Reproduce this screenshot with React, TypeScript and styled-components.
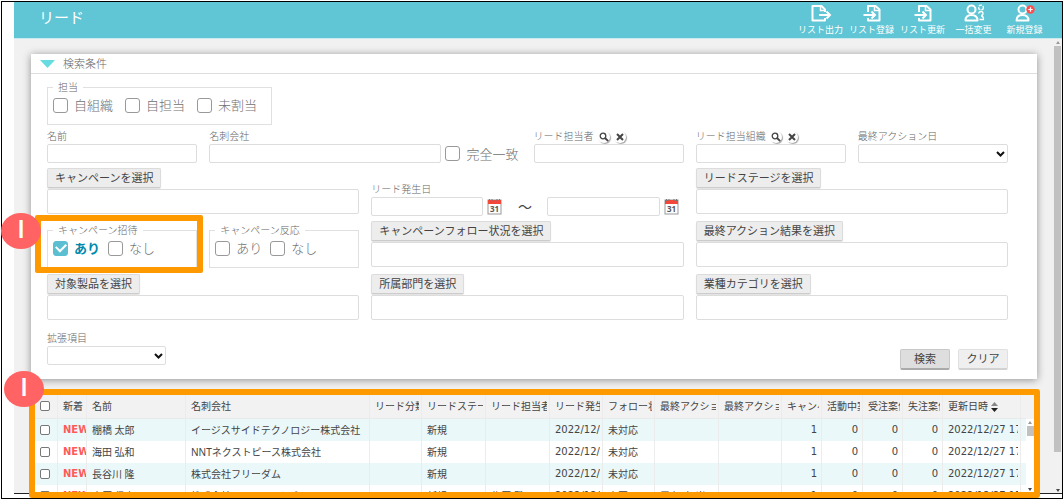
import React, { useId } from "react";
import styled, { createGlobalStyle, css } from "styled-components";

const GlobalStyle = createGlobalStyle`
  * { box-sizing: border-box; }
  body {
    margin: 0;
    background: #fff;
    color: #666;
    font-family: "Noto Sans", "Noto Sans CJK JP", sans-serif;
    font-size: 10px;
    font-weight: 300;
  }
  button, input, select { font: inherit; color: inherit; margin: 0; }
`;

const Frame = styled.div`
  display: flex;
  flex-direction: column;
  height: calc(100vh - 1px);
  margin: 1px 0 0 1px;
  padding: 0 0 4px 12px;
  border: 1px solid #000;
`;

const Header = styled.header`
  display: flex;
  flex: none;
  justify-content: space-between;
  height: 37px;
  padding: 0 12px 0 25px;
  color: #fff;
  background: #60c5d4;
  border-bottom: 1px solid #c9eaef;
`;

const Title = styled.h1`
  margin: 0;
  font-size: 15px;
  font-weight: 400;
  line-height: 30px;
`;

const Actions = styled.nav`
  display: flex;
`;

const ActionButton = styled.button`
  display: flex;
  flex-direction: column;
  align-items: center;
  width: 51px;
  padding: 2px 0 0;
  border: 0;
  background: none;
  color: #fff;
  font-size: 9px;
  font-weight: 400;
  line-height: 12px;
  white-space: nowrap;
  svg { flex: none; }
`;

const Main = styled.div`
  display: flex;
  flex: 1;
  min-height: 0;
  background: #f1f1f1;
  border-bottom: 1px solid #222;
`;

const Content = styled.main`
  display: flex;
  flex: 1;
  flex-direction: column;
  min-width: 0;
  padding: 15px 16px 0 17px;
`;

const ScrollTrack = styled.div<{ $wide?: boolean }>`
  display: flex;
  flex: 1;
  flex-direction: column;
  align-items: center;
  justify-content: space-between;
  width: ${(p) => (p.$wide ? "9px" : "8px")};
  padding: 2px 0 1px;
  background: ${(p) => (p.$wide ? "#f1f1f1" : "#fff")};
`;

const PageScroll = styled.div`
  display: flex;
  flex: none;
`;

const Thumb = styled.div<{ $share: string }>`
  flex: none;
  width: 7px;
  height: ${(p) => p.$share};
  margin: 2px 0 auto;
  background: #c1c1c1;
`;

const Arrow = styled.span<{ $down?: boolean }>`
  flex: none;
  border: 2px solid transparent;
  ${(p) =>
    p.$down
      ? css`border-top: 3px solid #444; border-bottom: 0;`
      : css`border-bottom: 3px solid #999; border-top: 0;`}
`;

const Card = styled.section`
  flex: none;
  background: #fff;
  box-shadow: 0 1px 8px rgba(0, 0, 0, 0.4);
`;

const CardHead = styled.h2`
  display: flex;
  align-items: center;
  gap: 8px;
  height: 20px;
  margin: 0;
  padding-left: 9px;
  border-bottom: 1px solid #ddd;
  font-size: 11px;
  font-weight: 300;
  line-height: 18px;
`;

const Form = styled.form`
  display: flex;
  flex-direction: column;
  padding: 7px 29px 14px 16px;
`;

const FieldGrid = styled.div`
  display: grid;
  grid-template-columns: repeat(6, minmax(0, 1fr));
  grid-template-rows: 34px;
  grid-auto-rows: 48px;
  gap: 5px 12px;
  margin-top: 4px;
`;

const Cell = styled.div<{ $span?: number; $end?: boolean }>`
  position: relative;
  display: flex;
  flex-direction: column;
  justify-content: ${(p) => (p.$end ? "flex-end" : "flex-start")};
  grid-column: span ${(p) => p.$span ?? 1};
`;

const LabelRow = styled.div`
  display: flex;
  align-items: center;
  gap: 4px;
  height: 15px;
  line-height: 15px;
  white-space: nowrap;
`;

const RoundButton = styled.button`
  display: flex;
  align-items: center;
  justify-content: center;
  width: 12px;
  height: 12px;
  padding: 0;
  border: 0;
  border-radius: 50%;
  background: #fff;
  box-shadow: 1px 1px 1px rgba(0, 0, 0, 0.35);
`;

const box = css`
  border: 1px solid #ddd;
  border-radius: 2px;
  background: #fff;
`;

const TextInput = styled.input<{ $tall?: boolean }>`
  ${box}
  flex: 1 1 0;
  width: 100%;
  min-width: 0;
  min-height: ${(p) => (p.$tall ? "25px" : "19px")};
  max-height: ${(p) => (p.$tall ? "25px" : "19px")};
  padding: 0 4px;
`;

const SelectWrap = styled.div<{ $narrow?: boolean }>`
  position: relative;
  display: flex;
  width: ${(p) => (p.$narrow ? "119px" : "100%")};
  svg {
    position: absolute;
    top: 7px;
    right: 3px;
    pointer-events: none;
  }
`;

const Select = styled.select`
  ${box}
  flex: 1;
  height: 19px;
  appearance: none;
`;

const CompanyRow = styled.div`
  display: flex;
  align-items: center;
  gap: 4px;
  padding-right: 3px;
`;

const PickButton = styled.button`
  align-self: flex-start;
  height: 20px;
  margin-bottom: 1px;
  padding: 0 7px 1px;
  border: 1px solid #dcdcdc;
  border-bottom-color: #ccc;
  border-radius: 2px;
  background: #ededed;
  box-shadow: 0 1px 1px rgba(0, 0, 0, 0.12);
  color: #444;
  font-size: 11px;
  font-weight: 400;
  line-height: 16px;
  white-space: nowrap;
`;

const FormButton = styled.button<{ $primary?: boolean }>`
  width: 50px;
  height: 21px;
  padding: 0 0 1px;
  border: 1px solid ${(p) => (p.$primary ? "#c8c8c8" : "#e0e0e0")};
  border-bottom: 2px solid ${(p) => (p.$primary ? "#aaa" : "#d2d2d2")};
  border-radius: 2px;
  background: ${(p) => (p.$primary ? "#dedede" : "#efefef")};
  color: #444;
  font-size: 11px;
  font-weight: 400;
  line-height: 16px;
`;

const Group = styled.fieldset<{ $gap: number; $fit?: boolean }>`
  display: flex;
  align-items: center;
  gap: ${(p) => p.$gap}px;
  align-self: ${(p) => (p.$fit ? "flex-start" : "stretch")};
  height: 44px;
  min-width: 0;
  margin: ${(p) => (p.$fit ? "0" : "3px 0 0")};
  padding: 0 14px 0 5px;
  border: 1px solid #e0e0e0;
`;

const Legend = styled.legend`
  padding: 0 5px;
  line-height: 12px;
`;

const CheckLabel = styled.label<{ $on?: boolean }>`
  display: flex;
  align-items: center;
  gap: 6px;
  padding-top: 4px;
  margin-bottom: -2px;
  color: ${(p) => (p.$on ? "#0089ab" : "#707070")};
  font-size: 13px;
  font-weight: ${(p) => (p.$on ? 700 : 300)};
  line-height: 16px;
  white-space: nowrap;
  ${CompanyRow} & { padding: 0; margin: 0; }
`;

const Checkbox = styled.input.attrs({ type: "checkbox" })<{ $small?: boolean }>`
  display: flex;
  align-items: center;
  justify-content: center;
  flex: none;
  width: ${(p) => (p.$small ? "10px" : "15px")};
  height: ${(p) => (p.$small ? "10px" : "15px")};
  appearance: none;
  border: 1px solid ${(p) => (p.$small ? "#777" : "#999")};
  border-radius: ${(p) => (p.$small ? "2px" : "3px")};
  background: #fff;
  &:checked {
    border-color: #5bbfd1;
    background: #5bbfd1;
  }
  &:checked::after {
    content: "";
    width: 8px;
    height: 5px;
    margin-bottom: 3px;
    border: solid #fff;
    border-width: 0 0 2px 2px;
    transform: rotate(-45deg);
  }
`;

const DateRange = styled.div`
  display: grid;
  grid-template-columns: 1fr 15px 37px 1fr 15px;
  column-gap: 4px;
  align-items: center;
  padding-right: 5px;
  line-height: 19px;
  text-align: center;
`;

const Tilde = styled.span`
  color: #444;
  font-size: 14px;
  font-weight: 400;
`;

const IconButton = styled.button`
  display: flex;
  padding: 0;
  border: 0;
  background: none;
`;

const FormFoot = styled.div`
  display: flex;
  align-items: flex-end;
  justify-content: space-between;
  margin-top: 9px;
`;

const FootButtons = styled.div`
  display: flex;
  gap: 8px;
  margin-bottom: -5px;
`;

const Highlight = styled.div`
  position: absolute;
  inset: -6px -6px -4px -12px;
  z-index: 1;
  border: 6px solid #ff9900;
  border-radius: 2px;
  pointer-events: none;
`;

const Marker = styled.span<{ $x: number; $y: number }>`
  position: absolute;
  left: ${(p) => p.$x}px;
  top: ${(p) => p.$y}px;
  z-index: 2;
  width: 40px;
  height: 36px;
  border-radius: 50%;
  background: #ff6363;
  color: #fff;
  font-family: Inter, sans-serif;
  font-size: 24px;
  font-weight: 600;
  line-height: 33px;
  text-align: center;
`;

const Results = styled.section`
  position: relative;
  display: flex;
  flex: 1;
  min-height: 60px;
  margin: 10px -3px -5px -2px;
  border: 6px solid #ff9900;
  border-radius: 3px;
  background: #fff;
`;

const TableClip = styled.div`
  flex: 1;
  min-width: 0;
  overflow: hidden;
`;

const Table = styled.table`
  width: 100%;
  table-layout: fixed;
  border-collapse: separate;
  border-spacing: 0;
  color: #444;
  tbody tr:nth-child(odd) { background: #ebf8fa; }
`;

const cellStyle = css`
  padding: 0 2px 0 5px;
  border-right: 1px solid #ececec;
  text-align: left;
  font-weight: 400;
  line-height: 20px;
  &:last-child { border-right: 0; }
`;

const Th = styled.th`
  ${cellStyle}
  height: 24px;
  padding-bottom: 2px;
  background: #f2f2f2;
  border-bottom: 1px solid #e9e9e9;
`;

const Td = styled.td<{ $num?: boolean; $flush?: boolean }>`
  ${cellStyle}
  height: 22px;
  padding-right: ${(p) => (p.$flush ? 0 : p.$num ? 4 : 2)}px;
  padding-bottom: 1px;
  text-align: ${(p) => (p.$num ? "right" : "left")};
`;

const Clip = styled.span<{ $digits?: boolean }>`
  display: block;
  overflow: hidden;
  font-family: ${(p) => (p.$digits ? '"DejaVu Sans", sans-serif' : "inherit")};
  white-space: nowrap;
`;

const NewFlag = styled.strong`
  color: #ff5a5a;
  font-family: "DejaVu Sans", sans-serif;
  font-weight: 700;
`;

const Gutter = styled.div`
  display: flex;
  flex: none;
  flex-direction: column;
`;

const GutterHead = styled.div`
  height: 24px;
  background: #f2f2f2;
`;

const ListOut = () => (
  <svg width="22" height="20" viewBox="0 0 22 20" fill="none" stroke="#fff" strokeWidth="2">
    <path d="M15 8V5.500L11.500 2H2.500v14.500H15V14" strokeLinejoin="round" />
    <path d="M10.500 2v4.500H15" strokeWidth="1.500" />
    <path d="M9 11h10.500M16.500 7.500L20 11l-3.500 3.500" />
  </svg>
);

const ListIn = () => (
  <svg width="22" height="20" viewBox="0 0 22 20" fill="none" stroke="#fff" strokeWidth="2">
    <path d="M7 8V2h7.500L18.500 5.500v11H7V14" strokeLinejoin="round" />
    <path d="M13.500 2v4.500h5" strokeWidth="1.500" />
    <path d="M2.500 11h11M10.500 7.500L14 11l-3.500 3.500" />
  </svg>
);

const People = () => (
  <svg width="22" height="20" viewBox="0 0 22 20" fill="none" stroke="#fff" strokeWidth="2">
    <circle cx="8.500" cy="5.500" r="4" />
    <path d="M2.500 16.500c0-3 1.500-5.500 6-5.500s6 2.500 6 5.500z" strokeLinejoin="round" />
    <circle cx="18" cy="3.500" r="2.400" strokeWidth="1.400" strokeDasharray="3 1" />
    <path d="M15.500 9.500c.5-1.500 1.500-2 2.500-2s2 .7 2 2-1 2-2 2" strokeWidth="1.300" />
    <path d="M16.500 15.500h4c0-2-.8-3.500-2.500-3.500" strokeWidth="1.300" />
  </svg>
);

const PersonAdd = () => (
  <svg width="22" height="20" viewBox="0 0 22 20" fill="none" stroke="#fff" strokeWidth="2">
    <circle cx="8.500" cy="5.500" r="4" />
    <path d="M2.500 16.500c0-3 1.500-5.500 6-5.500s6 2.500 6 5.500z" strokeLinejoin="round" />
    <circle cx="16.500" cy="5.500" r="4.200" fill="#ff4d4d" stroke="none" />
    <path d="M16.500 3.300v4.400M14.300 5.500h4.400" strokeWidth="1.200" />
  </svg>
);

const Calendar = () => (
  <svg width="15" height="17" viewBox="0 0 15 17">
    <rect x="1" y="2" width="13" height="14" fill="#fff" stroke="#999" />
    <rect x="1" y="2" width="13" height="4" fill="#f2483c" />
    <path d="M2.500 1v2M5 1v2M10 1v2M12.500 1v2" stroke="#777" />
    <text x="7.500" y="14" fontSize="8" fontWeight="700" fill="#555" textAnchor="middle">31</text>
  </svg>
);

const Chevron = () => (
  <svg width="9" height="6" viewBox="0 0 9 6" fill="none" stroke="#111" strokeWidth="2">
    <path d="M1 1l3.500 3.500L8 1" />
  </svg>
);

const Magnifier = () => (
  <svg width="10" height="10" viewBox="0 0 10 10" fill="none" stroke="#444">
    <circle cx="4" cy="4" r="2.800" strokeWidth="1.300" />
    <path d="M6 6l3.200 3.200" strokeWidth="1.800" />
  </svg>
);

const Cross = () => (
  <svg width="8" height="8" viewBox="0 0 8 8" fill="none" stroke="#444" strokeWidth="2">
    <path d="M1 1l6 6M7 1L1 7" />
  </svg>
);

const SortMark = () => (
  <svg width="7" height="10" viewBox="0 0 7 10" style={{ verticalAlign: "middle" }}>
    <path d="M0 4l3.500-4L7 4z" fill="#888" />
    <path d="M0 6l3.500 4L7 6z" fill="#222" />
  </svg>
);

function Check({ text, on }: { text: string; on?: boolean }) {
  return (
    <CheckLabel $on={on}>
      <Checkbox defaultChecked={on} />
      {text}
    </CheckLabel>
  );
}

function Field({ label, lookup }: { label: string; lookup?: boolean }) {
  const id = useId();
  return (
    <Cell>
      <LabelRow>
        <label htmlFor={id}>{label}</label>
        {lookup && (
          <>
            <RoundButton type="button" aria-label={`${label}を検索`}><Magnifier /></RoundButton>
            <RoundButton type="button" aria-label={`${label}をクリア`}><Cross /></RoundButton>
          </>
        )}
      </LabelRow>
      <TextInput id={id} />
    </Cell>
  );
}

function SelectField({ label, narrow }: { label: string; narrow?: boolean }) {
  const id = useId();
  return (
    <Cell>
      <LabelRow><label htmlFor={id}>{label}</label></LabelRow>
      <SelectWrap $narrow={narrow}>
        <Select id={id}><option></option></Select>
        <Chevron />
      </SelectWrap>
    </Cell>
  );
}

function Picker({ text }: { text: string }) {
  return (
    <Cell $span={2}>
      <PickButton type="button">{text}</PickButton>
      <TextInput $tall readOnly aria-label={text} />
    </Cell>
  );
}

const actions = [
  { text: "リスト出力", Icon: ListOut },
  { text: "リスト登録", Icon: ListIn },
  { text: "リスト更新", Icon: ListIn },
  { text: "一括変更", Icon: People },
  { text: "新規登録", Icon: PersonAdd },
];

const columns: { text: string; width?: number; num?: boolean; date?: boolean }[] = [
  { text: "名前", width: 99 },
  { text: "名刺会社" },
  { text: "リード分類", width: 52 },
  { text: "リードステージ", width: 64 },
  { text: "リード担当者", width: 64 },
  { text: "リード発生日", width: 53, date: true },
  { text: "フォロー状況", width: 52 },
  { text: "最終アクション日", width: 64 },
  { text: "最終アクション結果", width: 63 },
  { text: "キャンペーン", width: 40, num: true },
  { text: "活動中案件", width: 41, num: true },
  { text: "受注案件", width: 40, num: true },
  { text: "失注案件", width: 40, num: true },
  { text: "更新日時", width: 78, date: true },
];

const rows = [
  ["棚橋 太郎", "イージスサイドテクノロジー株式会社", "", "新規", "", "2022/12/27", "未対応", "", "", "1", "0", "0", "0", "2022/12/27 17:30"],
  ["海田 弘和", "NNTネクストピース株式会社", "", "新規", "", "2022/12/27", "未対応", "", "", "1", "0", "0", "0", "2022/12/27 17:30"],
  ["長谷川 隆", "株式会社フリーダム", "", "新規", "", "2022/12/27", "未対応", "", "", "1", "0", "0", "0", "2022/12/27 17:30"],
  ["岩原 信彦", "株式会社SSRシステムズ", "", "新規", "佐原 武", "2022/12/27", "商図", "電存 (担当)", "2022/12/14", "1", "0", "0", "0", "2022/12/27 17:30"],
];

export default function App() {
  return (
    <>
      <GlobalStyle />
      <Frame>
        <Header>
          <Title>リード</Title>
          <Actions>
            {actions.map(({ text, Icon }) => (
              <ActionButton key={text} type="button"><Icon />{text}</ActionButton>
            ))}
          </Actions>
        </Header>
        <Main>
          <Content>
            <Card>
              <CardHead>
                <svg width="15" height="9" viewBox="0 0 15 9"><path d="M0 1h15L7.500 9z" fill="#66dbe0" /></svg>
                検索条件
              </CardHead>
              <Form>
                <Group $gap={12} $fit>
                  <Legend>担当</Legend>
                  <Check text="自組織" />
                  <Check text="自担当" />
                  <Check text="未割当" />
                </Group>
                <FieldGrid>
                  <Field label="名前" />
                  <Cell $span={2}>
                    <LabelRow><label htmlFor="company">名刺会社</label></LabelRow>
                    <CompanyRow>
                      <TextInput id="company" />
                      <Check text="完全一致" />
                    </CompanyRow>
                  </Cell>
                  <Field label="リード担当者" lookup />
                  <Field label="リード担当組織" lookup />
                  <SelectField label="最終アクション日" />

                  <Picker text="キャンペーンを選択" />
                  <Cell $span={2} $end>
                    <LabelRow><label htmlFor="from">リード発生日</label></LabelRow>
                    <DateRange>
                      <TextInput id="from" />
                      <IconButton type="button" aria-label="開始日"><Calendar /></IconButton>
                      <Tilde>～</Tilde>
                      <TextInput aria-label="終了日" />
                      <IconButton type="button" aria-label="終了日を選ぶ"><Calendar /></IconButton>
                    </DateRange>
                  </Cell>
                  <Picker text="リードステージを選択" />

                  <Cell>
                    <Group $gap={8}>
                      <Legend>キャンペーン招待</Legend>
                      <Check text="あり" on />
                      <Check text="なし" />
                    </Group>
                    <Highlight />
                    <Marker $x={-46} $y={-8}>I</Marker>
                  </Cell>
                  <Cell>
                    <Group $gap={8}>
                      <Legend>キャンペーン反応</Legend>
                      <Check text="あり" />
                      <Check text="なし" />
                    </Group>
                  </Cell>
                  <Picker text="キャンペーンフォロー状況を選択" />
                  <Picker text="最終アクション結果を選択" />

                  <Picker text="対象製品を選択" />
                  <Picker text="所属部門を選択" />
                  <Picker text="業種カテゴリを選択" />
                </FieldGrid>
                <FormFoot>
                  <SelectField label="拡張項目" narrow />
                  <FootButtons>
                    <FormButton type="button" $primary>検索</FormButton>
                    <FormButton type="button">クリア</FormButton>
                  </FootButtons>
                </FormFoot>
              </Form>
            </Card>
            <Results>
              <Marker $x={-31} $y={-24}>I</Marker>
              <TableClip>
                <Table>
                  <colgroup>
                    <col width={23} />
                    <col width={29} />
                    {columns.map((c) => <col key={c.text} width={c.width} />)}
                    <col width={5} />
                  </colgroup>
                  <thead>
                    <tr>
                      <Th><Checkbox $small aria-label="すべて選択" /></Th>
                      <Th><Clip>新着</Clip></Th>
                      {columns.map((c, i) => (
                        <Th key={c.text}>
                          <Clip>{c.text}{i === columns.length - 1 && <> <SortMark /></>}</Clip>
                        </Th>
                      ))}
                      <Th />
                    </tr>
                  </thead>
                  <tbody>
                    {rows.map((row) => (
                      <tr key={row[0]}>
                        <Td><Checkbox $small aria-label={row[0]} /></Td>
                        <Td $flush><Clip><NewFlag>NEW</NewFlag></Clip></Td>
                        {row.map((value, i) => (
                          <Td key={i} $num={columns[i].num}>
                            <Clip $digits={columns[i].num || columns[i].date}>{value}</Clip>
                          </Td>
                        ))}
                        <Td />
                      </tr>
                    ))}
                  </tbody>
                </Table>
              </TableClip>
              <Gutter>
                <GutterHead />
                <ScrollTrack>
                  <Arrow />
                  <Thumb $share="10px" />
                  <Arrow $down />
                </ScrollTrack>
              </Gutter>
            </Results>
          </Content>
          <PageScroll>
            <ScrollTrack $wide>
              <Arrow />
              <Thumb $share="90%" />
              <Arrow $down />
            </ScrollTrack>
          </PageScroll>
        </Main>
      </Frame>
    </>
  );
}
